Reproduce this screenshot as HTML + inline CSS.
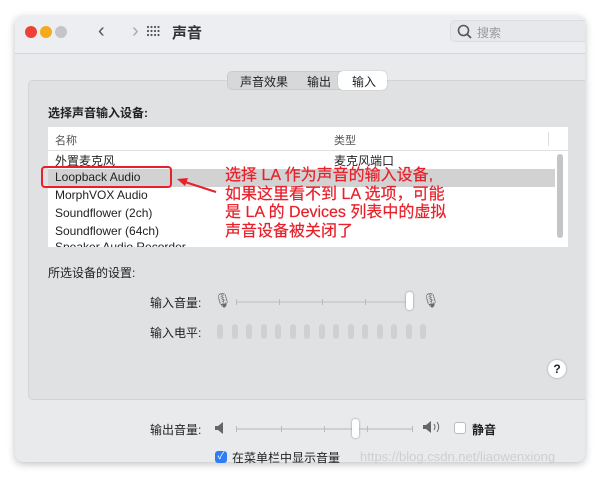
<!DOCTYPE html>
<html><head><meta charset="utf-8"><style>
*{margin:0;padding:0;box-sizing:border-box}
body{width:600px;height:478px;background:#fff;position:relative;overflow:hidden;font-family:"Liberation Sans","Noto Sans CJK SC",sans-serif;color:#222}
.a{position:absolute}
.win{left:15px;top:16px;width:570px;height:446px;background:#e9eaec;border-radius:8px;box-shadow:0 2px 8px rgba(0,0,0,.25)}
.tb{left:15px;top:16px;width:570px;height:38px;background:#eceef1;border-radius:8px 8px 0 0;border-bottom:1px solid #d4d5d8}
.dot{width:12px;height:12px;border-radius:50%;top:26px}
.panel{left:28px;top:80px;width:557px;height:320px;background:#dfe1e2;border:1px solid #d2d4d5;border-right:none;border-radius:5px 0 0 5px}
.t{font-size:12px;white-space:nowrap}
.red{color:#e8202a;font-size:16px;line-height:18.7px;-webkit-text-stroke:0.2px #e8202a}
.tk{position:absolute;width:1px;height:6px;background:#bbb;top:-2px}
</style></head><body>
<div class="a win"></div>
<div class="a tb"></div>
<div class="a dot" style="left:25px;background:#ef4237"></div>
<div class="a dot" style="left:40px;background:#f5aa1c"></div>
<div class="a dot" style="left:55px;background:#c4c5c7"></div>
<div class="a t" style="left:98px;top:20px;font-size:20px;color:#555">‹</div>
<div class="a t" style="left:132px;top:20px;font-size:20px;color:#aaa">›</div>
<svg class="a" style="left:146px;top:25px" width="14" height="12"><g fill="#555"><circle cx="2" cy="2" r="1.1"/><circle cx="5.5" cy="2" r="1.1"/><circle cx="9" cy="2" r="1.1"/><circle cx="12.5" cy="2" r="1.1"/><circle cx="2" cy="6" r="1.1"/><circle cx="5.5" cy="6" r="1.1"/><circle cx="9" cy="6" r="1.1"/><circle cx="12.5" cy="6" r="1.1"/><circle cx="2" cy="10" r="1.1"/><circle cx="5.5" cy="10" r="1.1"/><circle cx="9" cy="10" r="1.1"/><circle cx="12.5" cy="10" r="1.1"/></g></svg>
<div class="a t" style="left:172px;top:22px;font-size:15px;font-weight:bold;color:#333">声音</div>
<div class="a" style="left:450px;top:20px;width:135px;height:22px;background:#e6e8eb;border:1px solid #dcdde0;border-right:none;border-radius:5px 0 0 5px"></div>
<svg class="a" style="left:457px;top:24px" width="16" height="16"><circle cx="6.5" cy="6.5" r="5" fill="none" stroke="#555" stroke-width="1.6"/><line x1="10" y1="10" x2="14" y2="14" stroke="#555" stroke-width="1.8"/></svg>
<div class="a t" style="left:477px;top:24px;color:#999">搜索</div>
<div class="a panel"></div>
<div class="a" style="left:227px;top:71px;width:160px;height:19px;background:#d6d8da;border:1px solid #c9cbcd;border-radius:5px"></div>
<div class="a" style="left:338px;top:71px;width:49px;height:19px;background:#fff;border-radius:5px;box-shadow:0 0 1px #999"></div>
<div class="a t" style="left:240px;top:73px">声音效果</div>
<div class="a t" style="left:307px;top:73px">输出</div>
<div class="a t" style="left:352px;top:73px">输入</div>
<div class="a t" style="left:48px;top:104px;font-weight:bold">选择声音输入设备:</div>
<div class="a" style="left:48px;top:127px;width:520px;height:120px;background:#fff"></div>
<div class="a" style="left:48px;top:150px;width:520px;height:1px;background:#e2e2e2"></div>
<div class="a" style="left:48px;top:169px;width:507px;height:18px;background:#d2d2d3"></div>
<div class="a t" style="left:55px;top:132px;font-size:11px;color:#555">名称</div>
<div class="a t" style="left:334px;top:132px;font-size:11px;color:#555">类型</div>
<div class="a" style="left:548px;top:132px;width:1px;height:14px;background:#ddd"></div>
<div class="a" style="left:557px;top:154px;width:6px;height:84px;background:#c5c5c5;border-radius:3px"></div>
<div class="a t" style="left:55px;top:152px">外置麦克风</div>
<div class="a t" style="left:334px;top:152px">麦克风端口</div>
<div class="a t" style="left:55px;top:170px">Loopback Audio</div>
<div class="a t" style="left:55px;top:188px">MorphVOX Audio</div>
<div class="a t" style="left:55px;top:206px">Soundflower (2ch)</div>
<div class="a t" style="left:55px;top:224px">Soundflower (64ch)</div>
<div class="a" style="left:48px;top:241px;width:520px;height:6px;overflow:hidden"><div class="t" style="margin:0 0 0 7px;position:relative;top:-1px">Speaker Audio Recorder</div></div>
<div class="a" style="left:41px;top:166px;width:131px;height:22px;border:2px solid #e8202a;border-radius:4px"></div>
<svg class="a" style="left:174px;top:174px" width="46" height="22"><line x1="42" y1="18" x2="8" y2="7" stroke="#e8202a" stroke-width="2"/><polygon points="3,5 14,4 11,12" fill="#e8202a"/></svg>
<div class="a red" style="left:225px;top:167px">选择 LA 作为声音的输入设备,<br>如果这里看不到 LA 选项，可能<br>是 LA 的 Devices 列表中的虚拟<br>声音设备被关闭了</div>
<div class="a t" style="left:48px;top:264px">所选设备的设置:</div>
<div class="a t" style="left:150px;top:294px">输入音量:</div>
<div class="a t" style="left:214px;top:292px;font-size:14px;color:#666">🎙</div>
<div class="a" style="left:236px;top:301px;width:175px;height:2px;background:#cfd0d2"><div class="tk" style="left:0"></div><div class="tk" style="left:43px"></div><div class="tk" style="left:86px"></div><div class="tk" style="left:129px"></div></div>
<div class="a" style="left:406px;top:292px;width:7px;height:18px;background:#fff;border-radius:3px;box-shadow:0 0 2px #888"></div>
<div class="a t" style="left:422px;top:292px;font-size:14px;color:#666">🎙</div>
<div class="a t" style="left:150px;top:324px">输入电平:</div>
<div class="a" style="left:217px;top:324px;display:flex;gap:8.5px">
<div style="width:6px;height:15px;background:#cfd0d2;border-radius:3px"></div><div style="width:6px;height:15px;background:#cfd0d2;border-radius:3px"></div><div style="width:6px;height:15px;background:#cfd0d2;border-radius:3px"></div><div style="width:6px;height:15px;background:#cfd0d2;border-radius:3px"></div><div style="width:6px;height:15px;background:#cfd0d2;border-radius:3px"></div><div style="width:6px;height:15px;background:#cfd0d2;border-radius:3px"></div><div style="width:6px;height:15px;background:#cfd0d2;border-radius:3px"></div><div style="width:6px;height:15px;background:#cfd0d2;border-radius:3px"></div><div style="width:6px;height:15px;background:#cfd0d2;border-radius:3px"></div><div style="width:6px;height:15px;background:#cfd0d2;border-radius:3px"></div><div style="width:6px;height:15px;background:#cfd0d2;border-radius:3px"></div><div style="width:6px;height:15px;background:#cfd0d2;border-radius:3px"></div><div style="width:6px;height:15px;background:#cfd0d2;border-radius:3px"></div><div style="width:6px;height:15px;background:#cfd0d2;border-radius:3px"></div><div style="width:6px;height:15px;background:#cfd0d2;border-radius:3px"></div></div>
<div class="a" style="left:548px;top:360px;width:18px;height:18px;border-radius:50%;background:#fff;box-shadow:0 0 2px #999;font-size:12px;font-weight:bold;text-align:center;line-height:18px">?</div>
<div class="a t" style="left:150px;top:421px">输出音量:</div>
<svg class="a" style="left:214px;top:422px" width="12" height="12"><polygon points="1,4 4,4 9,0 9,12 4,8 1,8" fill="#666"/></svg>
<div class="a" style="left:236px;top:428px;width:177px;height:2px;background:#cfd0d2"><div class="tk" style="left:0"></div><div class="tk" style="left:45px"></div><div class="tk" style="left:88px"></div><div class="tk" style="left:131px"></div><div class="tk" style="left:176px"></div></div>
<div class="a" style="left:352px;top:419px;width:7px;height:19px;background:#fff;border-radius:3px;box-shadow:0 0 2px #888"></div>
<svg class="a" style="left:422px;top:421px" width="20" height="14"><polygon points="1,4 4,4 9,0 9,12 4,8 1,8" fill="#666"/><path d="M12 3q2 3 0 6M15 1q3.5 5 0 10" stroke="#666" fill="none"/></svg>
<div class="a" style="left:454px;top:422px;width:12px;height:12px;background:#fff;border:1px solid #bbb;border-radius:3px"></div>
<div class="a t" style="left:472px;top:421px;font-weight:bold">静音</div>
<div class="a" style="left:215px;top:451px;width:12px;height:12px;background:#2f7cf6;border-radius:3px;color:#fff;font-size:10px;line-height:12px;text-align:center">✓</div>
<div class="a t" style="left:232px;top:449px">在菜单栏中显示音量</div>
<div class="a t" style="left:360px;top:449px;color:rgba(200,200,200,.8);font-size:13px">https://blog.csdn.net/liaowenxiong</div>
</body></html>
